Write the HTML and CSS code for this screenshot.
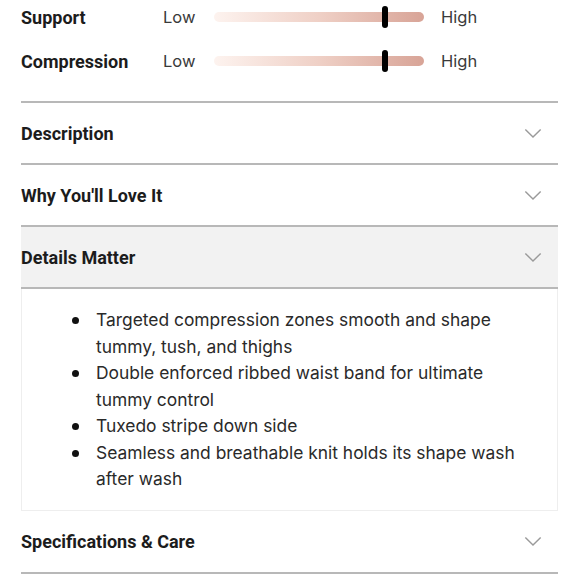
FILE: index.html
```html
<!DOCTYPE html>
<html>
<head>
<meta charset="utf-8">
<link rel="stylesheet" href="styles.css">
</head>
<body>
<div class="page">
  <div class="ratings">
    <div class="rating">
      <span class="r-label">Support</span>
      <span class="r-low">Low</span>
      <div class="track"><span class="thumb" style="left: 81.5%"></span></div>
      <span class="r-high">High</span>
    </div>
    <div class="rating">
      <span class="r-label">Compression</span>
      <span class="r-low">Low</span>
      <div class="track"><span class="thumb" style="left: 81.5%"></span></div>
      <span class="r-high">High</span>
    </div>
  </div>
  <div class="acc">
    <div class="acc-item">
      <div class="acc-head"><span>Description</span><svg class="chev" viewBox="0 0 20 12"><path d="M1.5 1.5 L10 10 L18.5 1.5"/></svg></div>
    </div>
    <div class="acc-item">
      <div class="acc-head"><span>Why You'll Love It</span><svg class="chev" viewBox="0 0 20 12"><path d="M1.5 1.5 L10 10 L18.5 1.5"/></svg></div>
    </div>
    <div class="acc-item open">
      <div class="acc-head"><span>Details Matter</span><svg class="chev" viewBox="0 0 20 12"><path d="M1.5 1.5 L10 10 L18.5 1.5"/></svg></div>
      <div class="acc-body">
        <ul>
          <li>Targeted compression zones smooth and shape tummy, tush, and thighs</li>
          <li>Double enforced ribbed waist band for ultimate tummy control</li>
          <li>Tuxedo stripe down side</li>
          <li>Seamless and breathable knit holds its shape wash after wash</li>
        </ul>
      </div>
    </div>
    <div class="acc-item last">
      <div class="acc-head"><span>Specifications &amp; Care</span><svg class="chev" viewBox="0 0 20 12"><path d="M1.5 1.5 L10 10 L18.5 1.5"/></svg></div>
    </div>
  </div>
</div>
</body>
</html>
```
FILE: styles.css
```css
html, body { margin: 0; padding: 0; background: #fff; }
.page {
  width: 537px;
  margin-left: 21px;
  font-family: "Inter", "Liberation Sans", sans-serif;
  color: #222;
}
.ratings { display: flex; flex-direction: column; gap: 22px; padding-top: 6px; padding-bottom: 29px; }
.rating {
  display: grid;
  grid-template-columns: 142px 51px 210px auto;
  align-items: center;
  height: 22px;
}
.r-label { font-family: "Roboto", sans-serif; font-weight: 700; font-size: 18px; color: #1c1c1c; }
.r-low, .r-high { font-family: "Inter", sans-serif; font-weight: 400; font-size: 16.5px; color: #3a3a3a; }
.r-high { margin-left: 17px; }
.track {
  position: relative;
  height: 10px;
  border-radius: 5px;
  background: linear-gradient(to right, #fdf3ef 0%, #efd0c6 50%, #d8a497 100%);
}
.thumb {
  position: absolute;
  top: -6px;
  width: 6px;
  height: 22px;
  margin-left: -3px;
  border-radius: 3px;
  background: #000;
}
.acc-item { border-top: 2px solid #b8b8b8; }
.acc-item.last { border-top: none; border-bottom: 2px solid #b8b8b8; }
.acc-head {
  height: 60px;
  display: flex;
  align-items: center;
  justify-content: space-between;
  font-family: "Roboto", sans-serif;
  font-weight: 700;
  font-size: 18px;
  color: #1c1c1c;
}
.acc-item.last .acc-head { height: 61px; }
.open .acc-head { background: #f2f2f2; border-bottom: 2px solid #b8b8b8; }
.chev { width: 18px; height: 11px; margin-right: 16px; fill: none; stroke: #9a9a9a; stroke-width: 1.6; }
.acc-body {
  border: 1px solid #eeeeee;
  border-top: none;
  padding: 18px 30px 17px 0;
}
.acc-body ul { margin: 0; padding-left: 50px; list-style: none; }
.acc-body li {
  display: flex;
  font-family: "Inter", sans-serif;
  font-size: 17.4px;
  line-height: 26.5px;
  color: #2a2a2a;
}
.acc-body li::before {
  content: "";
  flex: 0 0 7px;
  height: 7px;
  margin-top: 10px;
  margin-right: 17px;
  border-radius: 50%;
  background: #111;
}
```
